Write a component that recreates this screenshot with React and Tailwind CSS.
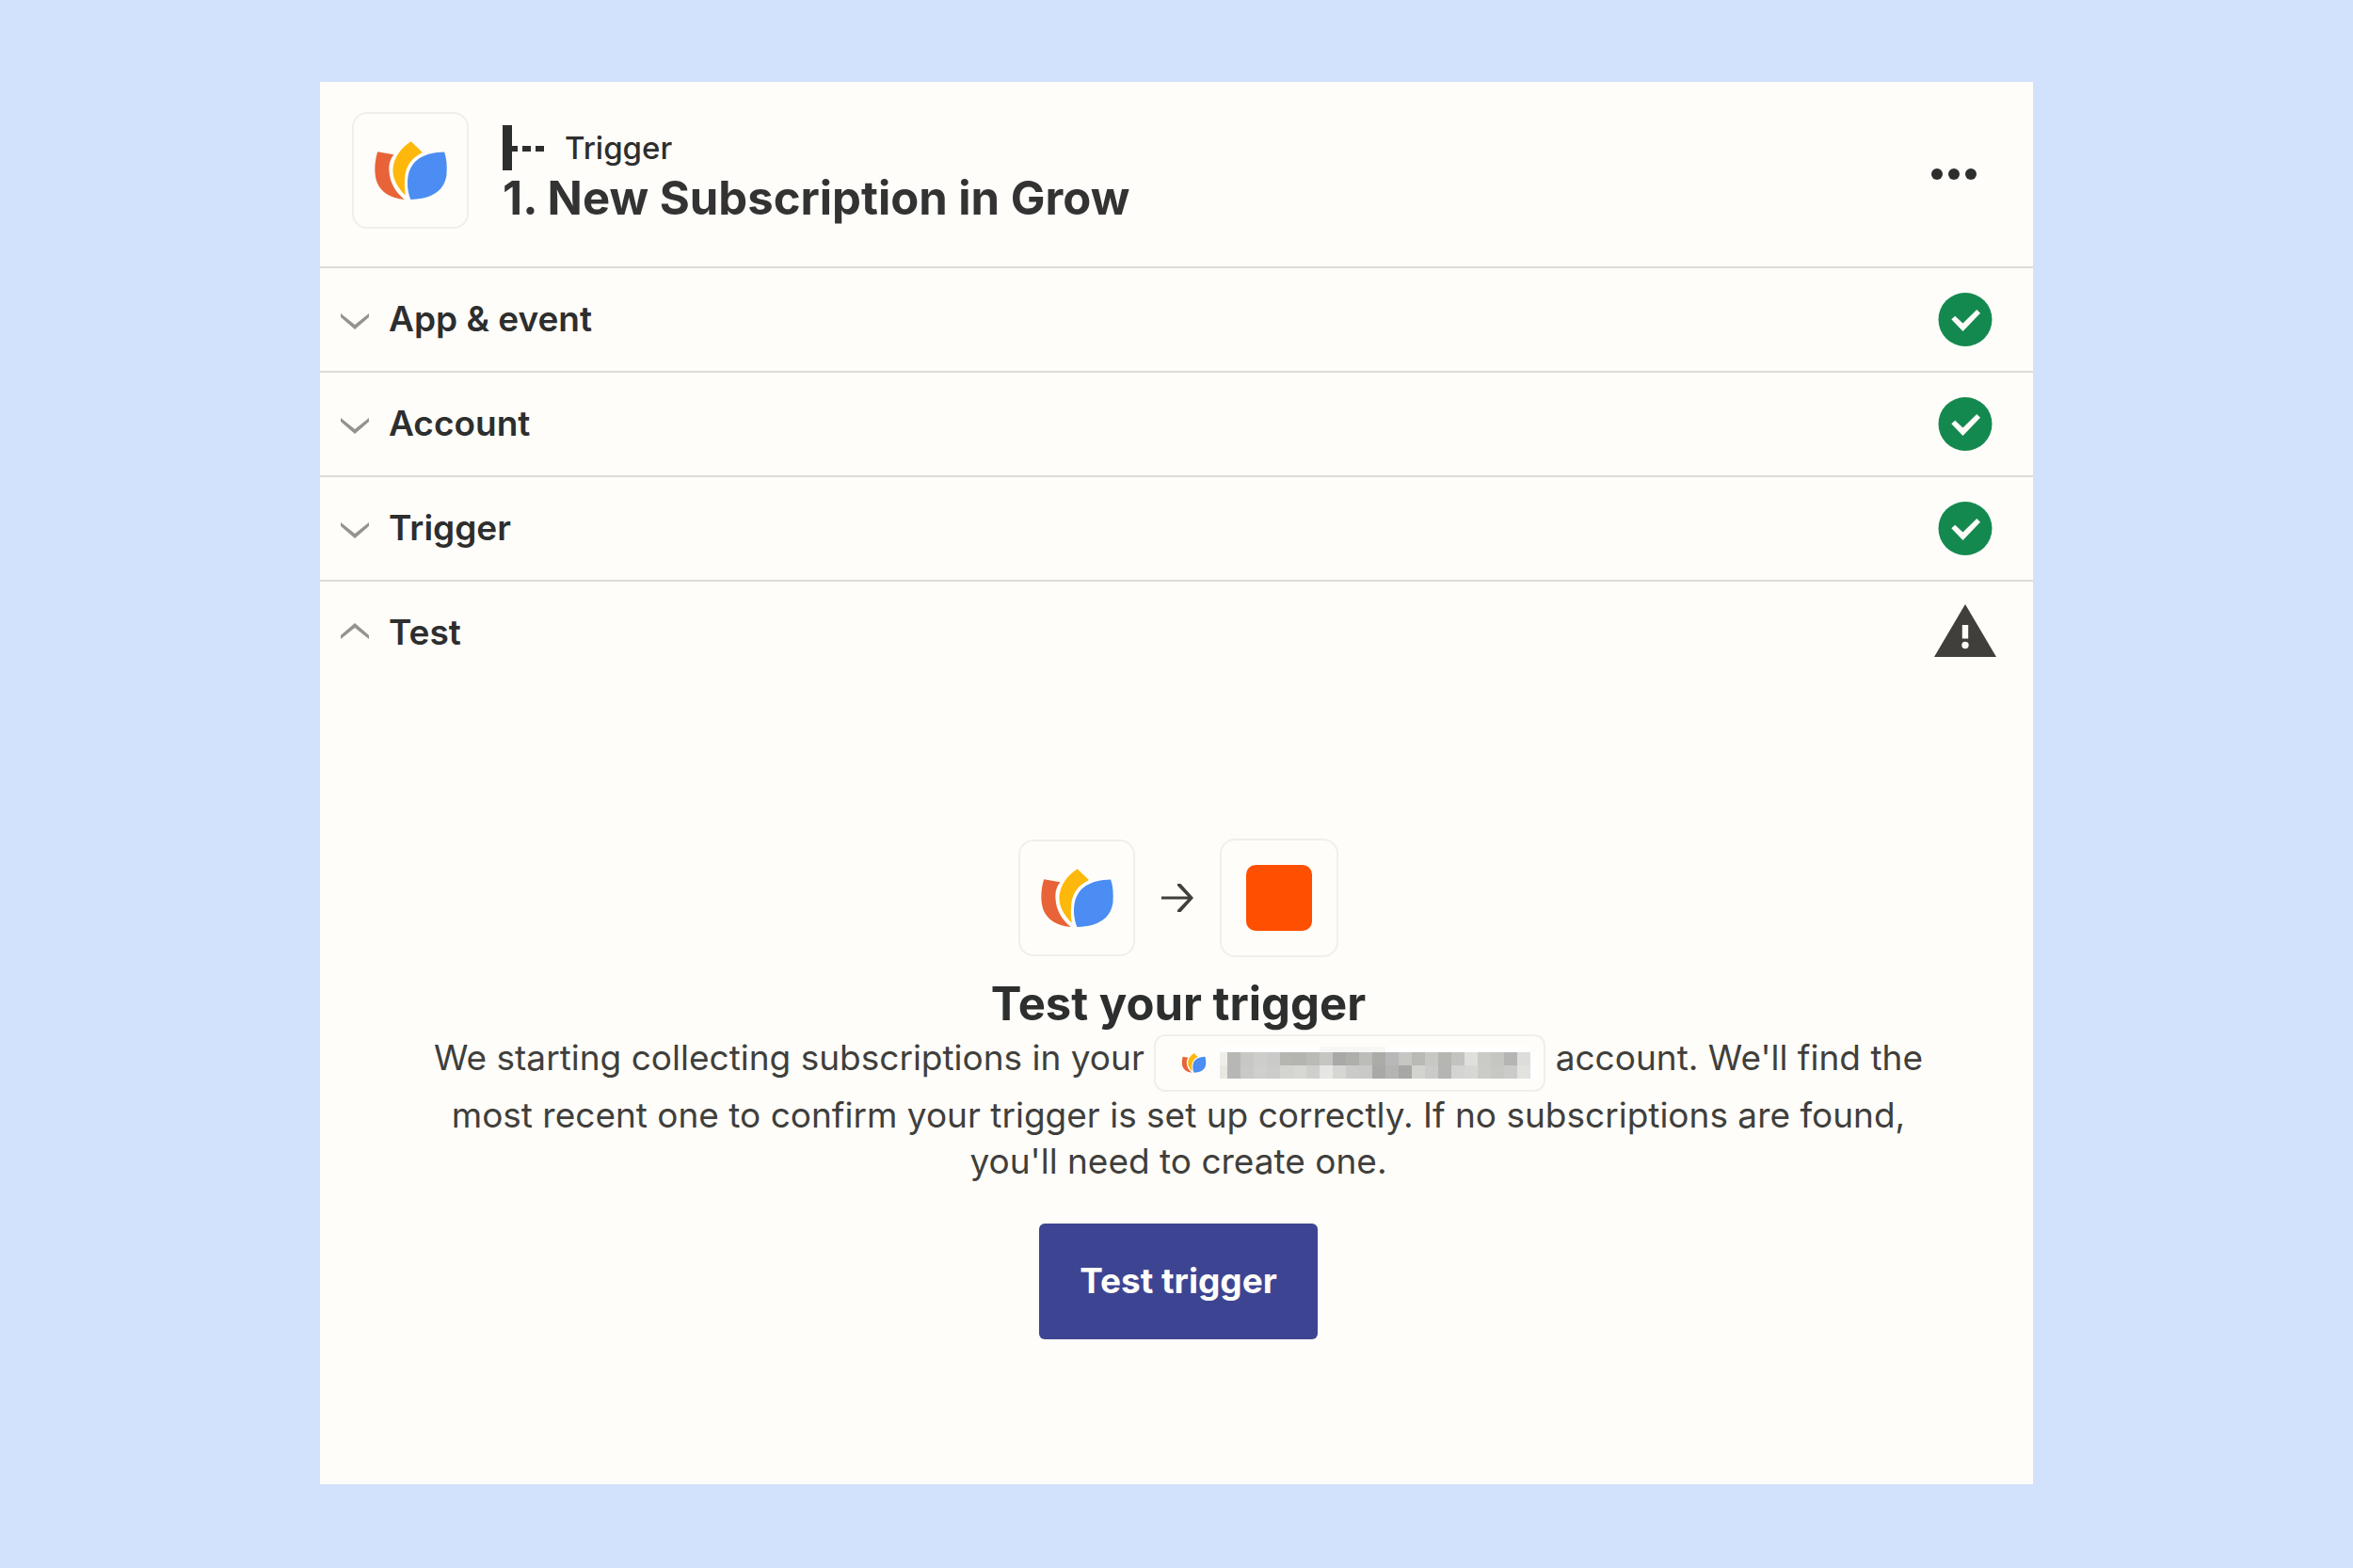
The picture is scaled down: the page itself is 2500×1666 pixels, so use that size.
import React from "react";

function LotusLogo({ className }) {
  return (
    <svg viewBox="198 208 237 190" className={className} aria-hidden="true">
      <path d="M210 242 L262 251 C249 267 246 285 247 303 C249 342 268 372 296 395 C250 391 221 371 208 340 C198 312 200 273 210 242 Z" fill="#e86338" />
      <path d="M317 209 L354 244 C316 262 298 292 297 330 C296 348 297 366 299 382 C272 355 258 328 259 298 C262 260 285 230 317 209 Z" fill="#fdb80b" />
      <path d="M316 395 C305 368 304 341 308 318 C318 268 360 244 424 243 C431 264 433 287 431 316 C424 366 386 393 316 395 Z" fill="#4b8df3" />
    </svg>
  );
}

function TriggerGlyph() {
  return (
    <svg viewBox="0 0 44 50" className="h-[50px] w-11 shrink-0" fill="#2d2e2e" aria-hidden="true">
      <path d="M0 1h10v48H0z M10 23h6v6h-6z M21 23h9v6h-9z M35 23h9v6h-9z" />
    </svg>
  );
}

function Chevron({ up }) {
  return (
    <svg viewBox="0 0 30 17" className={up ? "mb-1 h-[17px] w-[30px] rotate-180" : "mt-1 h-[17px] w-[30px]"} aria-hidden="true">
      <path d="M0 0 L15 12 L30 0 V4 L15 17 L0 4 Z" fill="#95938e" />
    </svg>
  );
}

function CheckBadge() {
  return (
    <svg viewBox="0 0 66 57" className="h-[57px] w-[66px]" role="img" aria-label="Complete">
      <circle cx="33" cy="28.500" r="28.500" fill="#14894f" />
      <path d="M18.300 28.300 L22.200 24.700 L30.500 32.500 L45.300 18 L49 21.700 L30.500 41 Z" fill="#fffdf9" />
    </svg>
  );
}

function WarningBadge() {
  return (
    <svg viewBox="0 0 66 56" className="mb-1.5 h-14 w-[66px]" role="img" aria-label="Needs attention">
      <path d="M33 0 L66 56 H0 Z" fill="#403f3c" />
      <path d="M29.800 22h6.400v14.500h-6.400z" fill="#fffdf9" />
      <circle cx="33" cy="43.500" r="3.700" fill="#fffdf9" />
    </svg>
  );
}

function ArrowRight() {
  return (
    <svg viewBox="0 0 34 30" className="h-[30px] w-[34px]" aria-hidden="true">
      <path d="M0 13.500 H28 L17 2 V0 H20.500 L34 15 L20.500 30 H17 V28 L28 16.500 H0 Z" fill="#403f3c" />
    </svg>
  );
}

const TOP = "b7b7b5 c7c7c4 cdcdcb cacac8 b6b6b1 b4b5b0 babab7 c5c5c2 a9a9a8 aeaeab bcbcb9 abaca7 b7b8b7 c6c6c3 b9b9b5 c7c7c3 b5b6b2 c2c2c0 dfdfdc cacac6 c5c5c2 b5b5b4 dddddb".split(" ");
const BOTTOM = "b7b7b5 c9c9c6 cfcfcd cccccb d4d4d1 d7d7d3 cfd0cc e6e6e5 d6d6d2 cbcbc9 c9c9c8 a9aaa5 b4b4b2 a7a7a6 d3d3cf cbcbca b5b5b3 d4d4d2 d7d7d4 cbcbc7 c7c7c4 cbcbc9 e2e2df".split(" ");

function RedactedEmail() {
  return (
    <svg viewBox="0 0 338 34" className="h-[34px] w-[338px]" shapeRendering="crispEdges" role="img" aria-label="Hidden account name">
      <rect width="330" height="6" fill="#ffffff" />
      <rect x="106" width="70" height="6" fill="#f7f7f5" />
      <rect x="330" y="6" width="8" height="28" fill="#ffffff" />
      <rect y="6" width="8" height="14" fill="#efeee8" />
      <rect y="20" width="8" height="14" fill="#e9e8e0" />
      {TOP.map((c, i) => (
        <rect key={"t" + i} x={8 + i * 14} y="6" width="14" height="14" fill={"#" + c} />
      ))}
      {BOTTOM.map((c, i) => (
        <rect key={"b" + i} x={8 + i * 14} y="20" width="14" height="14" fill={"#" + c} />
      ))}
    </svg>
  );
}

function SectionRow({ label, open, children }) {
  return (
    <h2 className="border-t-2 border-[#dddcd8]">
      <button type="button" aria-expanded={open} className="flex h-[109px] w-full items-center pr-[39px] pl-[22px] text-left">
        <Chevron up={open} />
        <span className="ml-[21px] flex-1 pb-[2px] text-[37px] leading-[46px] font-semibold text-[#2d2e2e]">{label}</span>
        {children}
      </button>
    </h2>
  );
}

export default function App() {
  return (
    <main className="min-h-screen bg-[#d2e2fc] px-8 py-[87px] font-['Inter',sans-serif] [font-optical-sizing:none]">
      <section className="mx-auto max-w-[1820px] bg-[#fffdf9] pb-[154px]">
        <header className="flex items-start px-[34px] pt-8 pb-10">
          <div className="flex size-[124px] shrink-0 items-center justify-center rounded-2xl border-2 border-[#f0efec]">
            <LotusLogo className="h-[63px] w-[79px]" />
          </div>
          <div className="ml-9 flex-1 pt-[13px]">
            <div className="flex items-center gap-[22px]">
              <TriggerGlyph />
              <span className="text-[33px] leading-[48px] font-medium text-[#2d2e2e]">Trigger</span>
            </div>
            <h1 className="text-[49px] leading-[58px] font-bold text-[#333333]">1. New Subscription in Grow</h1>
          </div>
          <button type="button" aria-label="More options" className="mt-[54px] mr-[26px]">
            <svg viewBox="0 0 48 24" className="h-6 w-12" fill="#2d2e2e" aria-hidden="true">
              <circle cx="6" cy="12" r="6" />
              <circle cx="24" cy="12" r="6" />
              <circle cx="42" cy="12" r="6" />
            </svg>
          </button>
        </header>

        <SectionRow label="App & event" open={false}><CheckBadge /></SectionRow>
        <SectionRow label="Account" open={false}><CheckBadge /></SectionRow>
        <SectionRow label="Trigger" open={false}><CheckBadge /></SectionRow>
        <SectionRow label="Test" open={true}><WarningBadge /></SectionRow>

        <div className="flex flex-col items-center pt-[164px] pl-1 text-center">
          <div className="flex items-center gap-7">
            <div className="flex size-[124px] items-center justify-center rounded-2xl border-2 border-[#f0efec]">
              <LotusLogo className="h-[63px] w-[79px]" />
            </div>
            <ArrowRight />
            <div className="flex size-[126px] items-center justify-center rounded-2xl border-2 border-[#f0efec]">
              <div className="size-[70px] rounded-[10px] bg-[#ff4f00]" />
            </div>
          </div>
          <h3 className="mt-5 mb-[2px] text-[49px] leading-[60px] font-bold text-[#2d2e2e]">Test your trigger</h3>
          <p className="max-w-[1600px] text-[37px] leading-[49px] text-[#403f3c]">
            We starting collecting subscriptions in your{" "}
            <span className="inline-flex h-[61px] w-[416px] items-center rounded-xl border-2 border-[#f0efec] pl-[27px] align-top">
              <LotusLogo className="h-[21px] w-[27px]" />
              <span className="ml-[14px] flex pb-[2px]"><RedactedEmail /></span>
            </span>{" "}
            account. We'll find the most recent one to confirm your trigger is set up correctly. If no subscriptions are found, you'll need to create one.
          </p>
          <button type="button" className="mt-[42px] h-[123px] rounded-md bg-[#3d4592] px-[43px] pb-[2px] text-[37px] leading-[46px] font-bold text-[#fffdf9]">
            Test trigger
          </button>
        </div>
      </section>
    </main>
  );
}
